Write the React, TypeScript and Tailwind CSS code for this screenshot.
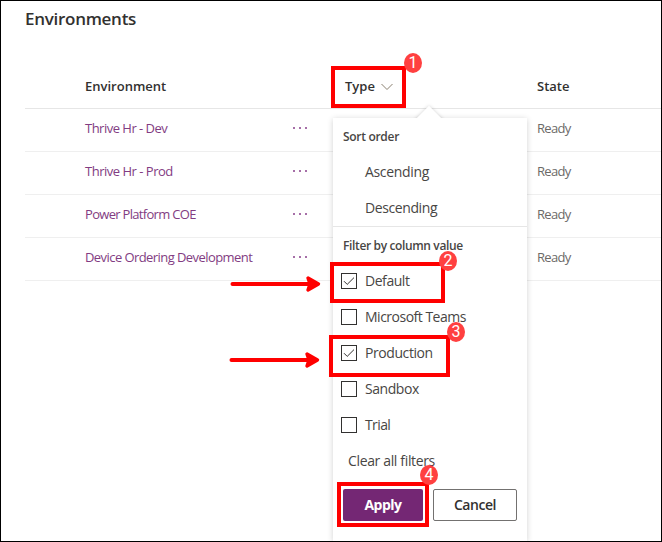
const environments = [
  { name: "Thrive Hr - Dev", track: "tracking-[-0.51px]" },
  { name: "Thrive Hr - Prod", track: "tracking-[-0.49px]" },
  { name: "Power Platform COE", track: "tracking-[-0.69px]" },
  { name: "Device Ordering Development", track: "tracking-[-0.57px]" },
];

const sortOptions = [
  { label: "Ascending", track: "tracking-[-0.34px]" },
  { label: "Descending", track: "tracking-[-0.4px]" },
];

const filterOptions = [
  { label: "Default", checked: true, track: "tracking-[-0.45px]" },
  { label: "Microsoft Teams", checked: false, track: "tracking-[-0.5px]" },
  { label: "Production", checked: true, track: "tracking-[-0.42px]" },
  { label: "Sandbox", checked: false, track: "tracking-[-0.45px]" },
  { label: "Trial", checked: false, track: "tracking-[-0.6px]" },
];

function Dots() {
  return (
    <span className="flex gap-1 pb-0.5">
      <i className="size-0.5 bg-[#a66fa8]" />
      <i className="size-0.5 bg-[#a66fa8]" />
      <i className="size-0.5 bg-[#a66fa8]" />
    </span>
  );
}

function Checkbox({ checked }: { checked: boolean }) {
  return (
    <span className="flex size-4 shrink-0 items-center justify-center border border-[#323130] bg-white">
      {checked && (
        <svg width="12" height="10" viewBox="0 0 12 10" fill="none" stroke="#323130" strokeWidth="1">
          <path d="M1 5.2 4.2 8.4 11 1.6" />
        </svg>
      )}
    </span>
  );
}

function Badge({ n, place }: { n: number; place: string }) {
  return (
    <span
      className={`absolute z-20 flex h-[20px] w-[18px] items-center justify-center rounded-[50%] bg-[#ff4040] font-['Roboto',sans-serif] text-[16px] leading-none text-white ${place}`}
    >
      {n}
    </span>
  );
}

function Arrow({ place }: { place: string }) {
  return (
    <svg className={`absolute z-20 ${place}`} width="92" height="18" viewBox="0 0 92 18">
      <path d="M2.5 9H84" stroke="#f00" strokeWidth="4" strokeLinecap="round" />
      <path d="M78 3 88.5 9 78 15 80 9Z" fill="#f00" stroke="#f00" strokeWidth="3.4" strokeLinejoin="round" />
    </svg>
  );
}

function Popup() {
  return (
    <div className="absolute top-[118px] left-[333px] z-10 h-[423px] w-[194px]">
      <div className="absolute inset-0 shadow-[0_1px_6px_rgba(0,0,0,0.18)]" />
      <div className="absolute -top-[8px] left-[86px] size-[20px] rotate-45 bg-white shadow-[0_0_4px_rgba(0,0,0,0.18)]" />
      <div className="relative flex h-full flex-col rounded-xs bg-white text-[14px] text-[#484644]">
        <div className="flex h-9 items-center pt-0.5 pl-2.5 text-[12px] font-semibold tracking-[-0.3px]">Sort order</div>
        {sortOptions.map((o) => (
          <div key={o.label} className={`flex h-9 items-center pb-0.5 pl-8 ${o.track}`}>
            {o.label}
          </div>
        ))}
        <div className="flex h-[37px] items-center border-t border-[#e6e6e6] pt-0.5 pl-2.5 text-[12px] font-semibold tracking-[-0.36px]">
          Filter by column value
        </div>
        {filterOptions.map((o) => (
          <label key={o.label} className="flex h-9 items-center gap-2 pl-2">
            <Checkbox checked={o.checked} />
            <span className={`pb-0.5 ${o.track}`}>{o.label}</span>
          </label>
        ))}
        <div className="flex h-9 items-center pb-0.5 pl-[15px] tracking-[-0.35px]">Clear all filters</div>
        <div className="mt-[10px] flex gap-2.5 pl-2.5">
          <button className="h-8 w-20 rounded-xs bg-[#742774] pb-0.5 font-bold tracking-[-0.5px] text-white">Apply</button>
          <button className="h-8 w-[84px] rounded-xs border border-[#737170] pb-0.5 font-semibold tracking-[-0.45px] text-[#323130]">
            Cancel
          </button>
        </div>
      </div>
    </div>
  );
}

export default function App() {
  return (
    <div className="relative h-[542px] w-[662px] overflow-hidden border border-black bg-white font-['Open_Sans','Noto_Sans',sans-serif]">
      <h1 className="h-[63px] pt-[6px] pl-6 text-[17px] leading-6 font-semibold tracking-[-0.28px] text-[#323130]">
        Environments
      </h1>
      <div className="ml-6">
        <div className="flex h-[45px] items-center border-b border-[#e6e6e6] pt-0.5 pl-[60px] text-[13px] font-semibold text-[#323130]">
          <span className="w-[260px]">Environment</span>
          <span className="flex w-[192px] items-center gap-[6px]">
            Type
            <svg width="12" height="8" viewBox="0 0 12 8" fill="none" stroke="#8a8070" strokeWidth="1">
              <path d="M.5 1 6 6.5 11.5 1" />
            </svg>
          </span>
          <span>State</span>
        </div>
        {environments.map((e) => (
          <div key={e.name} className="flex h-[43px] items-center border-b border-[#efefef] pb-0.5 pl-[60px] text-[13px]">
            <span className={`w-[208px] text-[#823c82] ${e.track}`}>{e.name}</span>
            <span className="w-[244px]">
              <Dots />
            </span>
            <span className="tracking-[-0.7px] text-[#6c6a68]">Ready</span>
          </div>
        ))}
      </div>

      <div className="absolute -inset-px">
        <Popup />
        <div className="absolute top-[66px] left-[331px] z-10 h-[42px] w-[75px] border-4 border-[#f00]" />
        <div className="absolute top-[262px] left-[330px] z-10 h-[41px] w-[115px] border-4 border-[#f00]" />
        <div className="absolute top-[335px] left-[329px] z-10 h-[42px] w-[121px] border-4 border-[#f00]" />
        <div className="absolute top-[482px] left-[337px] z-10 h-[45px] w-[92px] border-4 border-[#f00]" />
        <Badge n={1} place="left-[404px] top-[53px]" />
        <Badge n={2} place="left-[439px] top-[251px]" />
        <Badge n={3} place="left-[447px] top-[322px]" />
        <Badge n={4} place="left-[420px] top-[465px]" />
        <Arrow place="left-[230px] top-[275px]" />
        <Arrow place="left-[229px] top-[351px]" />
        <div className="absolute inset-0 z-30 border border-black" />
      </div>
    </div>
  );
}
